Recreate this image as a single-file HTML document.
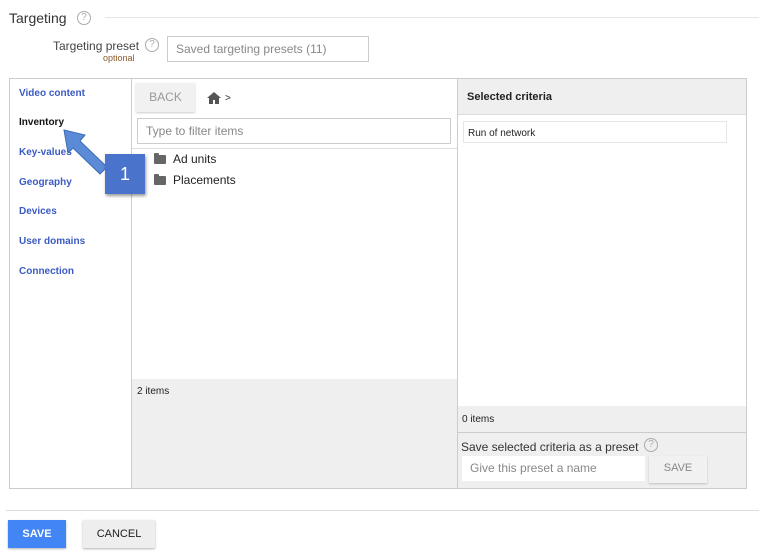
<!DOCTYPE html>
<html><head><meta charset="utf-8"><style>
*{box-sizing:border-box;margin:0;padding:0}
body{width:759px;height:556px;background:#fff;font-family:"Liberation Sans",sans-serif;position:relative;overflow:hidden;color:#222}
.a{position:absolute}
.q{position:absolute;width:14px;height:14px;border:1.3px solid #aaa;border-radius:50%;font-size:10px;color:#aaa;text-align:center;line-height:12px}
.nav{position:absolute;left:19px;font-size:10px;font-weight:bold;color:#3b5bc4}
.inp{position:absolute;border:1px solid #ccc;background:#fff;color:#888;font-size:12px;padding-left:8px}
.fold{position:absolute;width:12px;height:9px;background:#666;border-radius:1px}
.fold:before{content:"";position:absolute;left:0;top:-2px;width:5px;height:3px;background:#666;border-radius:1px 1px 0 0}
</style></head><body>
<div class="a" style="left:9px;top:10px;font-size:14px;color:#333">Targeting</div>
<div class="q" style="left:77px;top:11px">?</div>
<div class="a" style="left:105px;top:17px;width:654px;height:1px;background:#e5e5e5"></div>
<div class="a" style="left:53px;top:39px;font-size:12px;color:#444">Targeting preset</div>
<div class="a" style="left:103px;top:53px;font-size:9px;color:#8a5a2a">optional</div>
<div class="q" style="left:145px;top:38px">?</div>
<div class="inp" style="left:167px;top:36px;width:202px;height:26px;line-height:24px">Saved targeting presets (11)</div>

<div class="a" style="left:9px;top:78px;width:738px;height:411px;border:1px solid #ccc"></div>
<div class="a" style="left:131px;top:79px;width:1px;height:409px;background:#ccc"></div>
<div class="a" style="left:457px;top:79px;width:1px;height:409px;background:#ccc"></div>

<div class="nav" style="top:88px">Video content</div>
<div class="nav" style="top:117px;color:#111">Inventory</div>
<div class="nav" style="top:147px">Key-values</div>
<div class="nav" style="top:177px">Geography</div>
<div class="nav" style="top:206px">Devices</div>
<div class="nav" style="top:236px">User domains</div>
<div class="nav" style="top:266px">Connection</div>

<div class="a" style="left:136px;top:83px;width:59px;height:29px;background:#f1f1f1;box-shadow:0 1px 2px rgba(0,0,0,.2);color:#999;font-size:12px;text-align:center;line-height:29px">BACK</div>
<svg class="a" style="left:207px;top:92px" width="14" height="12" viewBox="0 0 14 12"><path d="M7 0L0 6h2v6h4V8h2v4h4V6h2z" fill="#555"/></svg>
<div class="a" style="left:225px;top:93px;font-size:10px;color:#333">&gt;</div>
<div class="inp" style="left:137px;top:118px;width:314px;height:26px;line-height:24px">Type to filter items</div>
<div class="a" style="left:132px;top:148px;width:325px;height:1px;background:#ddd"></div>
<div class="fold" style="left:154px;top:155px"></div>
<div class="a" style="left:173px;top:152px;font-size:12px">Ad units</div>
<div class="fold" style="left:154px;top:176px"></div>
<div class="a" style="left:173px;top:173px;font-size:12px">Placements</div>
<div class="a" style="left:132px;top:379px;width:325px;height:109px;background:#efefef"></div>
<div class="a" style="left:137px;top:386px;font-size:10px">2 items</div>

<div class="a" style="left:458px;top:79px;width:288px;height:36px;background:#efefef;border-bottom:1px solid #ddd"></div>
<div class="a" style="left:467px;top:91px;font-size:11px;font-weight:bold">Selected criteria</div>
<div class="a" style="left:463px;top:121px;width:264px;height:22px;border:1px solid #e5e5e5;font-size:10px;padding:6px 0 0 4px">Run of network</div>
<div class="a" style="left:458px;top:406px;width:288px;height:82px;background:#efefef"></div>
<div class="a" style="left:458px;top:432px;width:288px;height:1px;background:#ccc"></div>
<div class="a" style="left:462px;top:414px;font-size:10px">0 items</div>
<div class="a" style="left:461px;top:440px;font-size:12px;color:#333">Save selected criteria as a preset</div>
<div class="q" style="left:644px;top:438px">?</div>
<div class="inp" style="left:462px;top:456px;width:183px;height:25px;line-height:25px;border:none">Give this preset a name</div>
<div class="a" style="left:649px;top:456px;width:58px;height:27px;background:#f1f1f1;box-shadow:0 1px 2px rgba(0,0,0,.2);color:#888;font-size:11px;text-align:center;line-height:25px">SAVE</div>

<div class="a" style="left:6px;top:510px;width:753px;height:1px;background:#ddd"></div>
<div class="a" style="left:8px;top:520px;width:58px;height:28px;background:#4285f4;box-shadow:0 1px 2px rgba(0,0,0,.3);color:#fff;font-size:11px;font-weight:bold;text-align:center;line-height:28px">SAVE</div>
<div class="a" style="left:83px;top:520px;width:72px;height:28px;background:#eee;box-shadow:0 1px 2px rgba(0,0,0,.3);color:#222;font-size:11px;text-align:center;line-height:28px">CANCEL</div>

<svg class="a" style="left:60px;top:126px" width="60" height="60" viewBox="0 0 60 60"><path d="M4 4L25 9L20 15L47 41L40 48L13 22L8 27Z" fill="#5b8ad6" stroke="#3d6cb8" stroke-width="1"/></svg>
<div class="a" style="left:105px;top:154px;width:40px;height:40px;background:#4a74cc;box-shadow:1px 2px 3px rgba(0,0,0,.4);color:#fff;font-size:18px;text-align:center;line-height:40px">1</div>
</body></html>
